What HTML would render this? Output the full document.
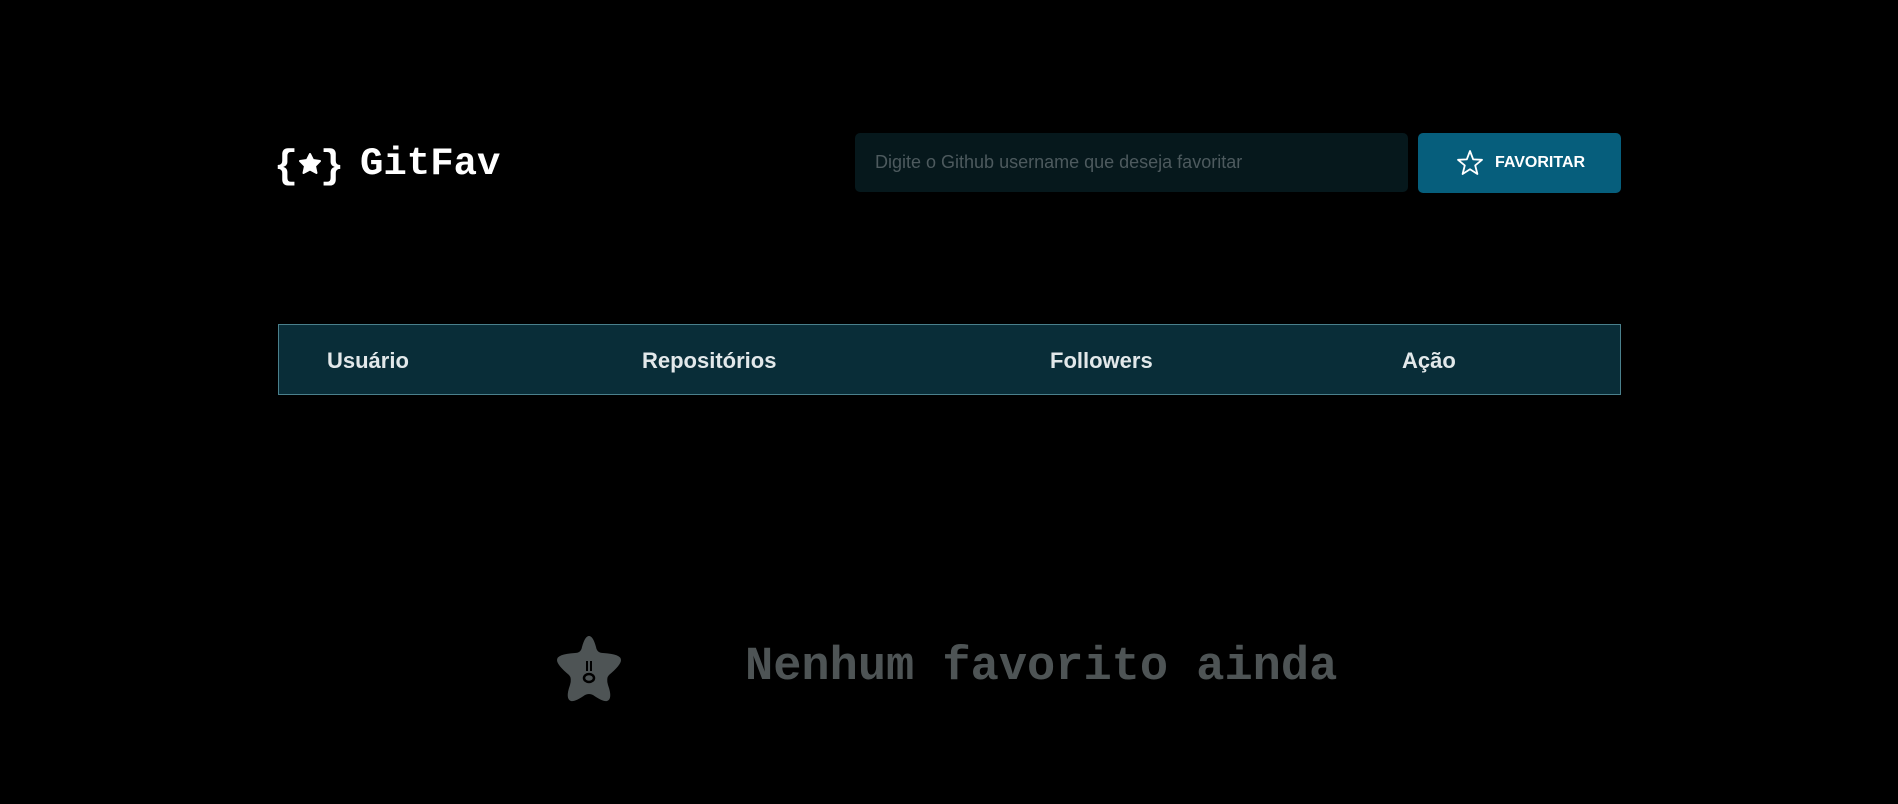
<!DOCTYPE html>
<html><head><meta charset="utf-8"><style>
*{margin:0;padding:0;box-sizing:border-box}
body{width:1898px;height:804px;background:#000;position:relative;overflow:hidden;font-family:"Liberation Sans",sans-serif}
.abs{position:absolute}
</style></head><body>
<div class="abs" style="left:276px;top:142px;width:68px;height:44px">
<svg width="68" height="44" viewBox="0 0 68 44"><text x="-2" y="35" font-family="Liberation Mono" font-weight="bold" font-size="40" fill="#fff">{</text><text x="44" y="35" font-family="Liberation Mono" font-weight="bold" font-size="40" fill="#fff">}</text>
<path d="M34 12 L37 18 L44 19 L39 24 L40.5 31 L34 27.5 L27.5 31 L29 24 L24 19 L31 18 Z" fill="#fff" stroke="#fff" stroke-width="2" stroke-linejoin="round"/></svg></div>
<div class="abs" style="left:360px;top:139px;font-family:'Liberation Mono',monospace;font-weight:bold;font-size:39px;color:#fff;line-height:50px">GitFav</div>
<div class="abs" style="left:855px;top:133px;width:553px;height:59px;background:#06181c;border-radius:5px;color:#4d5a5e;font-size:18px;line-height:59px;padding-left:20px">Digite o Github username que deseja favoritar</div>
<div class="abs" style="left:1418px;top:133px;width:203px;height:60px;background:#065e7c;border-radius:5px;color:#fff;font-weight:bold;font-size:16px;line-height:60px">
<svg class="abs" style="left:38px;top:16px" width="28" height="28" viewBox="0 0 28 28"><path d="M14 2 L17.2 10.4 L26 10.8 L19.2 16.4 L21.4 25 L14 20.2 L6.6 25 L8.8 16.4 L2 10.8 L10.8 10.4 Z" fill="none" stroke="#fff" stroke-width="1.8" stroke-linejoin="round"/></svg>
<span class="abs" style="left:77px">FAVORITAR</span></div>
<div class="abs" style="left:278px;top:324px;width:1343px;height:71px;background:#092d38;border:1px solid #4a808c;color:#e2e8ea;font-weight:bold;font-size:22px;line-height:71px">
<span class="abs" style="left:48px">Usuário</span><span class="abs" style="left:363px">Repositórios</span><span class="abs" style="left:771px">Followers</span><span class="abs" style="left:1123px">Ação</span></div>
<svg class="abs" style="left:553px;top:633px" width="72" height="70" viewBox="0 0 72 70"><path d="M36 3 Q40 3 43 14 Q44 20 50 20 Q68 21 68 27 Q68 32 56 42 Q53 45 55 52 Q60 66 54 68 Q50 69 40 62 Q36 60 32 62 Q22 69 18 68 Q12 66 17 52 Q19 45 16 42 Q4 32 4 27 Q4 21 22 20 Q28 20 29 14 Q32 3 36 3 Z" fill="#4e5455"/>
<rect x="33" y="28" width="2" height="10" fill="#000"/><rect x="37" y="28" width="2" height="10" fill="#000"/><ellipse cx="36" cy="45" rx="5" ry="4" fill="none" stroke="#000" stroke-width="2.5"/></svg>
<div class="abs" style="left:745px;top:638px;font-family:'Liberation Mono',monospace;font-weight:bold;font-size:47px;color:#4e5455;line-height:60px">Nenhum favorito ainda</div>
</body></html>
